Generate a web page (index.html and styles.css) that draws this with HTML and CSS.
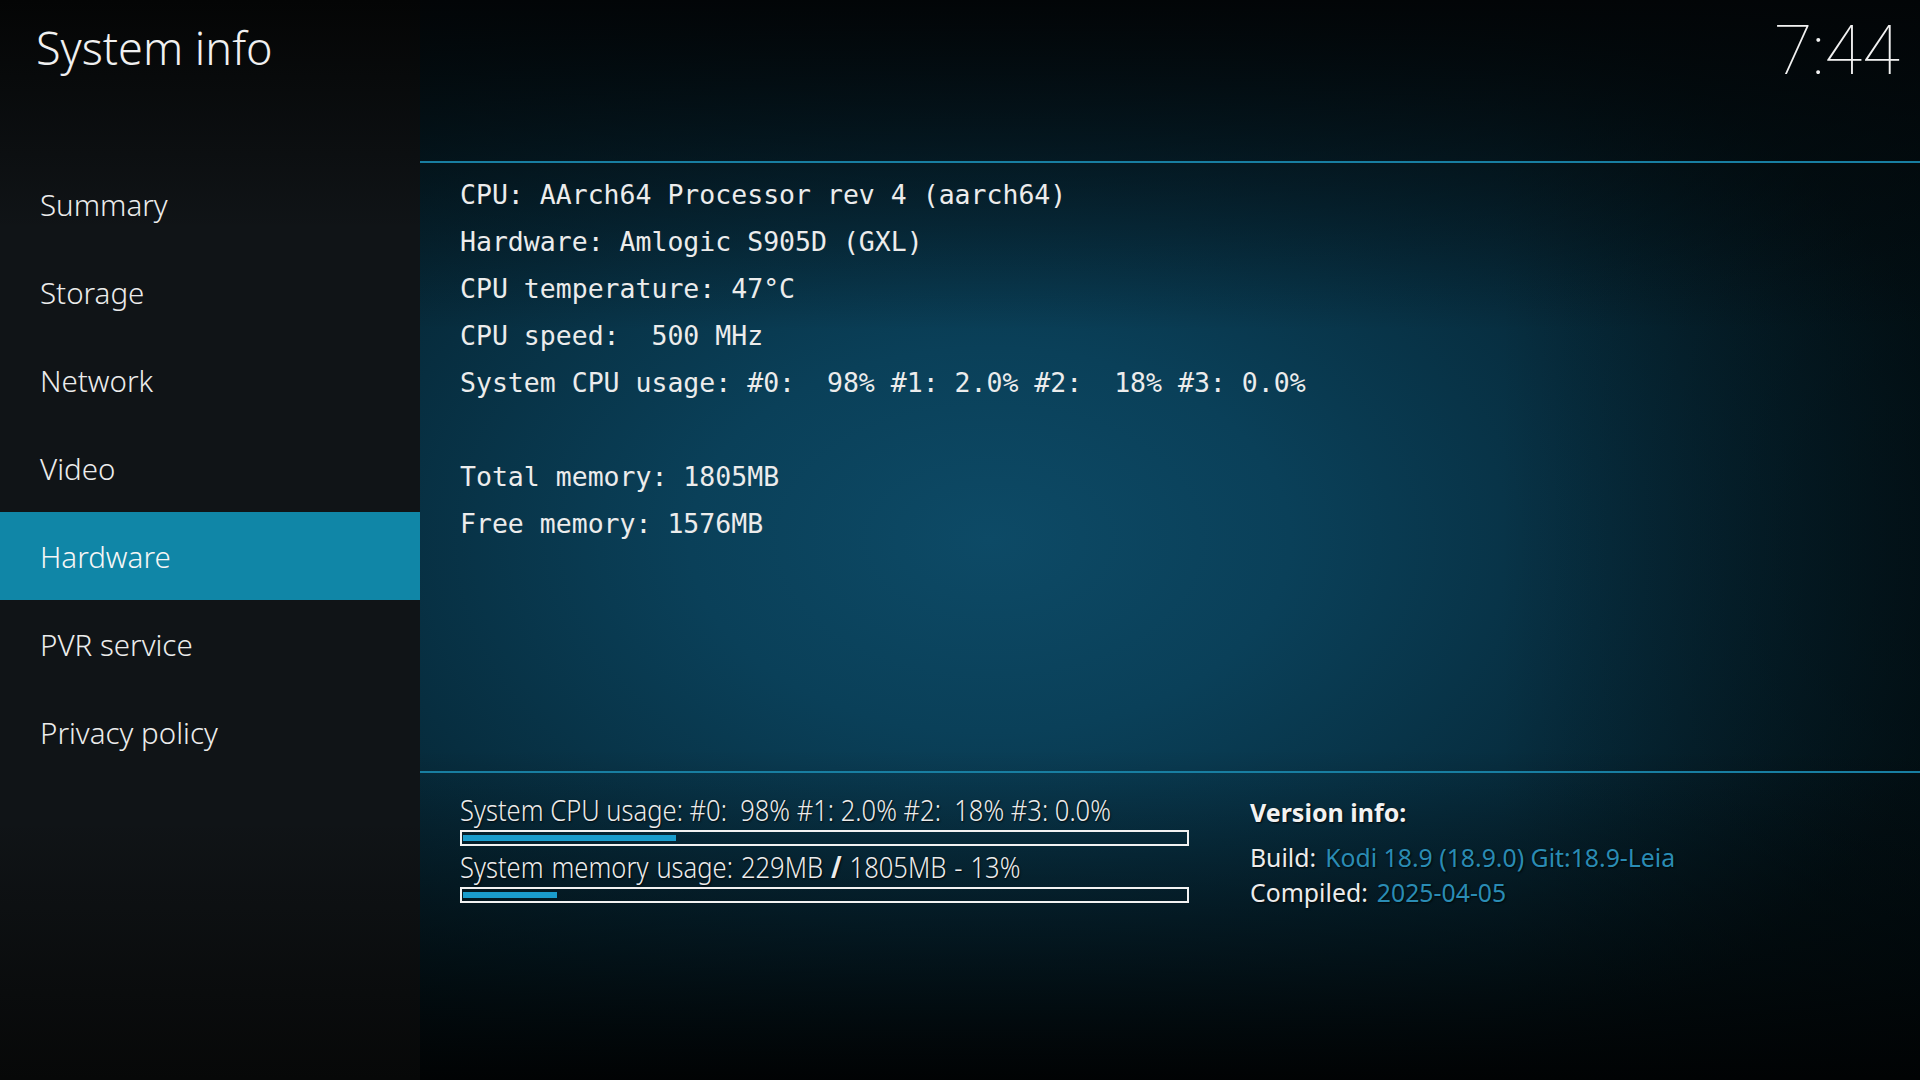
FILE: index.html
```html
<!DOCTYPE html>
<html>
<head>
<meta charset="utf-8">
<title>System info</title>
<link rel="stylesheet" href="styles.css">
</head>
<body>
<div class="screen">
  <aside class="sidebar">
    <div class="title">System info</div>
    <ul class="menu">
      <li class="item">Summary</li>
      <li class="item">Storage</li>
      <li class="item">Network</li>
      <li class="item">Video</li>
      <li class="item active">Hardware</li>
      <li class="item">PVR service</li>
      <li class="item">Privacy policy</li>
    </ul>
  </aside>
  <main class="main">
    <header class="topbar">
      <div class="clock">7:44</div>
    </header>
    <section class="info">
      <div class="line">CPU: AArch64 Processor rev 4 (aarch64)</div>
      <div class="line">Hardware: Amlogic S905D (GXL)</div>
      <div class="line">CPU temperature: 47°C</div>
      <div class="line">CPU speed:  500 MHz</div>
      <div class="line">System CPU usage: #0:  98% #1: 2.0% #2:  18% #3: 0.0%</div>
      <div class="line"> </div>
      <div class="line">Total memory: 1805MB</div>
      <div class="line">Free memory: 1576MB</div>
    </section>
    <section class="bottom">
      <div class="usage">
        <div class="label"><span class="ltext">System CPU usage: #0:  98% #1: 2.0% #2:  18% #3: 0.0%</span></div>
        <div class="bar"><div class="fill" style="width: 29.5%"></div></div>
        <div class="label"><span class="ltext mem">System memory usage: 229MB <b class="slash">/</b> 1805MB - 13%</span></div>
        <div class="bar"><div class="fill" style="width: 13%"></div></div>
      </div>
      <div class="version">
        <div class="vtitle">Version info:</div>
        <div class="vrow"><span class="vkey">Build:</span><span class="vval">Kodi 18.9 (18.9.0) Git:18.9-Leia</span></div>
        <div class="vrow"><span class="vkey">Compiled:</span><span class="vval">2025-04-05</span></div>
      </div>
    </section>
  </main>
</div>
</body>
</html>
```
FILE: styles.css
```css
html, body {
  margin: 0;
  padding: 0;
  background: #000;
}
.screen {
  width: 1920px;
  height: 1080px;
  display: flex;
  overflow: hidden;
  font-family: "Noto Sans", "Open Sans", sans-serif;
  color: #ececec;
}
.sidebar {
  width: 420px;
  flex: none;
  display: flex;
  flex-direction: column;
  background:
    linear-gradient(to bottom, #040505 0, rgba(8, 10, 11, 0) 230px),
    linear-gradient(to top, #070808 0, rgba(7, 8, 8, 0) 260px),
    #101417;
}
.title {
  height: 160px;
  box-sizing: border-box;
  padding: 18px 0 0 36px;
  font-size: 45px;
  font-weight: 300;
  line-height: 60px;
  color: #f0f0f0;
}
.menu {
  list-style: none;
  margin: 0;
  padding: 0;
}
.item {
  height: 88px;
  display: flex;
  align-items: center;
  padding-left: 40px;
  font-size: 29.5px;
  font-weight: 300;
  color: #ececec;
}
.item.active {
  background: #1086a7;
  color: #f6f6f6;
}
.main {
  flex: 1;
  display: flex;
  flex-direction: column;
  background:
    linear-gradient(to bottom, #020507 0, rgba(2, 6, 8, 0.6) 140px, rgba(2, 6, 8, 0) 330px),
    linear-gradient(to top, #010304 0, rgba(1, 4, 5, 0.65) 110px, rgba(1, 4, 5, 0) 330px),
    linear-gradient(to left, rgba(1, 6, 8, 0.55) 0, rgba(1, 6, 8, 0) 420px),
    radial-gradient(ellipse 1000px 640px at 38% 50%, #0d4a66 0%, #0a4059 30%, #072e40 62%, #041a22 100%);
}
.topbar {
  height: 163px;
  box-sizing: border-box;
  border-bottom: 2px solid #187ea1;
  display: flex;
  justify-content: flex-end;
  padding: 16px 20px 0 0;
}
.clock {
  font-family: Roboto, Lato, "Noto Sans", sans-serif;
  font-weight: 100;
  font-size: 69px;
  line-height: 69px;
  height: 69px;
  color: #f2f2f2;
}
.info {
  height: 610px;
  box-sizing: border-box;
  padding: 8px 0 0 40px;
  border-bottom: 2px solid #187ea1;
  font-family: "DejaVu Sans Mono", "Liberation Mono", monospace;
  font-size: 26.5px;
  color: #ececec;
}
.line {
  height: 47px;
  line-height: 47px;
  white-space: pre;
}
.bottom {
  display: flex;
  gap: 61px;
  padding: 16px 0 0 40px;
  text-shadow: 1px 1px 2px rgba(0, 0, 0, 0.8);
}
.usage {
  width: 729px;
}
.label {
  height: 41px;
  line-height: 41px;
  white-space: pre;
  color: #ececec;
}
.ltext {
  display: inline-block;
  font-size: 30px;
  font-weight: 300;
  transform: scaleX(0.852);
  transform-origin: left center;
}
.ltext.mem {
  word-spacing: 1.5px;
}
.slash {
  font-weight: 700;
}
.bar {
  height: 16px;
  box-sizing: border-box;
  border: 2px solid #f2f2f2;
  padding: 3px 1px;
}
.fill {
  height: 100%;
  background: #1a9ccc;
}
.version {
  padding-top: 5px;
}
.vtitle {
  font-size: 25px;
  font-weight: 700;
  line-height: 36px;
  color: #f2f2f2;
  margin-bottom: 10px;
}
.vrow {
  font-size: 24.8px;
  line-height: 35px;
  display: flex;
  gap: 9px;
}
.vkey {
  color: #ececec;
}
.vval {
  color: #2a8cb4;
}
```
